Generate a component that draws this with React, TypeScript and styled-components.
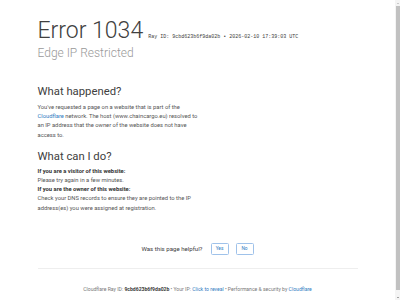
import React from "react";
import styled, { createGlobalStyle } from "styled-components";

const GlobalStyle = createGlobalStyle`
  html, body {
    margin: 0;
    padding: 0;
    background: #ffffff;
    overflow: hidden;
  }
  body {
    font-family: Roboto, "Liberation Sans", Arial, sans-serif;
    color: #404040;
  }
`;

const Page = styled.div`
  display: flex;
  width: 400px;
  height: 300px;
`;

const Main = styled.main`
  flex: 1;
  display: flex;
  flex-direction: column;
`;

const Wrapper = styled.div`
  width: 320px;
  margin: 0 auto;
`;

const Header = styled.header`
  padding-top: 19px;
`;

const TitleRow = styled.div`
  display: flex;
  align-items: baseline;
  gap: 5px;
`;

const Title = styled.h1`
  margin: 0;
  font-size: 23px;
  font-weight: 300;
  line-height: 23px;
  color: #404040;
`;

const RayInfo = styled.span`
  font-family: "Liberation Mono", "DejaVu Sans Mono", monospace;
  font-size: 5px;
  color: #404040;
`;

const Subtitle = styled.h2`
  margin: 4px 0 0;
  font-size: 12px;
  font-weight: 300;
  line-height: 14px;
  color: #999999;
`;

const Columns = styled.section`
  display: flex;
  flex-direction: column;
`;

const Column = styled.div<{ $top: number }>`
  width: 164px;
  margin-top: ${(p) => p.$top}px;
`;

const Heading = styled.h2`
  margin: 0;
  font-size: 11.3px;
  font-weight: 400;
  line-height: 14px;
  color: #404040;
`;

const Para = styled.p<{ $top?: number }>`
  margin: ${(p) => p.$top ?? 4}px 0 0;
  font-size: 5.8px;
  line-height: 9.2px;
  color: #555555;
`;

const Strong = styled.span`
  display: block;
  font-weight: 700;
  color: #333333;
`;

const Line = styled.span`
  display: block;
`;

const Link = styled.a`
  color: #2f7bbf;
  text-decoration: none;
`;

const Feedback = styled.div`
  display: flex;
  align-items: center;
  justify-content: center;
  gap: 7px;
  margin-top: 30px;
`;

const FeedbackText = styled.span`
  font-size: 6.1px;
  color: #404040;
  margin-right: 1px;
`;

const FeedbackButton = styled.button`
  width: 18px;
  height: 12px;
  padding: 0;
  border: 1px solid #9fc2ea;
  border-radius: 1.5px;
  background: #ffffff;
  color: #2f7bbf;
  font-family: Roboto, "Liberation Sans", Arial, sans-serif;
  font-size: 4.8px;
`;

const Footer = styled.footer`
  margin-top: 13px;
  border-top: 1px solid #eeeeee;
  padding-top: 16px;
  text-align: center;
  font-size: 5.1px;
  line-height: 8px;
  color: #777777;
`;

const Bold = styled.strong`
  font-weight: 700;
  color: #404040;
`;

const Sep = styled.span`
  margin: 0 1.2px;
`;

const ScrollBar = styled.div`
  width: 5px;
  display: flex;
  flex-direction: column;
  align-items: center;
  background: #f4f4f4;
`;

const Arrow = styled.div<{ $down?: boolean }>`
  height: 6px;
  display: flex;
  align-items: center;
  justify-content: center;
  &::after {
    content: "";
    width: 0;
    height: 0;
    border-left: 1.5px solid transparent;
    border-right: 1.5px solid transparent;
    ${(p) =>
      p.$down
        ? "border-top: 1.5px solid #505050;"
        : "border-bottom: 1.5px solid #a0a0a0;"}
  }
`;

const Thumb = styled.div`
  flex: 1;
  width: 4px;
  background: #c1c1c1;
  margin-bottom: 4px;
`;

export default function App() {
  return (
    <>
      <GlobalStyle />
      <Page>
        <Main>
          <Wrapper>
            <Header>
              <TitleRow>
                <Title>Error 1034</Title>
                <RayInfo>Ray ID: 9cbd623b6f9da02b • 2026-02-10 17:39:03 UTC</RayInfo>
              </TitleRow>
              <Subtitle>Edge IP Restricted</Subtitle>
            </Header>
            <Columns>
              <Column $top={25}>
                <Heading>What happened?</Heading>
                <Para>
                  You've requested a page on a website that is part of the{" "}
                  <Link href="#">Cloudflare</Link> network. The host (www.chaincargo.eu)
                  resolved to an IP address that the owner of the website does not have
                  access to.
                </Para>
              </Column>
              <Column $top={10}>
                <Heading>What can I do?</Heading>
                <Para $top={3}>
                  <Strong>If you are a visitor of this website:</Strong>
                  <Line>Please try again in a few minutes.</Line>
                  <Strong>If you are the owner of this website:</Strong>
                  <Line>
                    Check your DNS records to ensure they are pointed to the IP
                    address(es) you were assigned at registration.
                  </Line>
                </Para>
              </Column>
            </Columns>
            <Feedback>
              <FeedbackText>Was this page helpful?</FeedbackText>
              <FeedbackButton>Yes</FeedbackButton>
              <FeedbackButton>No</FeedbackButton>
            </Feedback>
            <Footer>
              Cloudflare Ray ID: <Bold>9cbd623b6f9da02b</Bold>
              <Sep>•</Sep>Your IP: <Link href="#">Click to reveal</Link>
              <Sep>•</Sep>Performance &amp; security by <Link href="#">Cloudflare</Link>
            </Footer>
          </Wrapper>
        </Main>
        <ScrollBar>
          <Arrow />
          <Thumb />
          <Arrow $down />
        </ScrollBar>
      </Page>
    </>
  );
}
